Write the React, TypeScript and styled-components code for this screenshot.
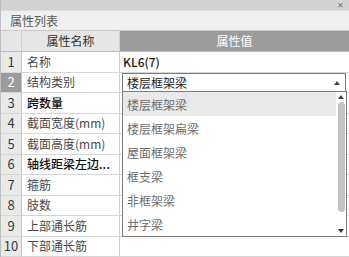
import React from 'react';
import styled, { createGlobalStyle } from 'styled-components';

const GlobalStyle = createGlobalStyle`
  html, body {
    margin: 0;
    padding: 0;
    background: #ffffff;
  }
  body {
    font-family: "Noto Sans CJK SC", "Noto Sans", sans-serif;
    font-size: 12px;
    color: #333;
  }
`;

const Panel = styled.div`
  position: relative;
  width: 349px;
  height: 257px;
  overflow: hidden;
  background: #fff;
  border-left: 1px solid #bdbdbd;
  box-sizing: border-box;
`;

const TopBar = styled.div`
  height: 10px;
  background: #d3d3d3;
  display: flex;
  justify-content: flex-end;
  align-items: center;
  padding-right: 5px;
  font-size: 8px;
  line-height: 10px;
  color: #777;
`;

const TitleBar = styled.div`
  height: 21px;
  box-sizing: border-box;
  background: #efefef;
  border-top: 1px solid #dcdcdc;
  border-bottom: 1px solid #c9c9c9;
  display: flex;
  align-items: center;
  padding-left: 9px;
  color: #5a5a5a;
  font-size: 12px;
  line-height: 20px;
`;

const Grid = styled.div`
  display: grid;
  grid-template-columns: 21px 98px 1fr;
  grid-template-rows: 21px repeat(10, 20.5px);
`;

const Cell = styled.div<{ $bg?: string; $align?: string; $color?: string; $weight?: number }>`
  box-sizing: border-box;
  display: flex;
  align-items: center;
  justify-content: ${(p) => p.$align || 'flex-start'};
  background: ${(p) => p.$bg || '#fff'};
  color: ${(p) => p.$color || '#3a3a3a'};
  font-weight: ${(p) => p.$weight || 400};
  border-right: 1px solid #d2d2d2;
  border-bottom: 1px solid #d6d6d6;
  line-height: 16px;
  white-space: nowrap;
  overflow: hidden;
`;

const NumCell = styled(Cell)`
  font-size: 13px;
  border-right-color: #c4c4c4;
`;

const NameCell = styled(Cell)`
  padding-left: 5px;
`;

const ValueCell = styled(Cell)`
  padding-left: 3px;
  border-right: none;
`;

const HeadCell = styled(Cell)`
  justify-content: center;
  border-bottom-color: #bcbcbc;
`;

const Combo = styled.div`
  flex: 1;
  align-self: stretch;
  margin: 0 3px 0 -1px;
  border: 1px solid #7a7a7a;
  border-bottom: none;
  display: flex;
  align-items: center;
  justify-content: space-between;
  padding: 0 5px 0 4px;
  color: #222;
`;

const TinyArrow = styled.span<{ $down?: boolean }>`
  width: 0;
  height: 0;
  border-left: 3px solid transparent;
  border-right: 3px solid transparent;
  ${(p) => (p.$down ? 'border-top: 4px solid #333;' : 'border-bottom: 4px solid #444;')}
`;

const DropList = styled.div`
  position: absolute;
  left: 121px;
  top: 91px;
  width: 225px;
  height: 146px;
  box-sizing: border-box;
  border: 1px solid #7e7e7e;
  background: #fff;
  display: flex;
`;

const Items = styled.div`
  flex: 1;
  display: flex;
  flex-direction: column;
`;

const Item = styled.div<{ $active?: boolean }>`
  height: 24px;
  display: flex;
  align-items: center;
  padding-left: 4px;
  color: #6e6e6e;
  background: ${(p) => (p.$active ? '#e9e9e9' : '#fff')};
`;

const ScrollBar = styled.div`
  width: 10px;
  display: flex;
  flex-direction: column;
  align-items: center;
  padding: 3px 0 3px;
  box-sizing: border-box;
`;

const Thumb = styled.div`
  width: 7px;
  margin: 3px 0;
  height: 110px;
  border-radius: 4px;
  background: #c3c3c3;
`;

const Spacer = styled.div`
  flex: 1;
`;

const rows = [
  { name: '名称', value: 'KL6(7)', valueBold: true },
  { name: '结构类别', combo: true },
  { name: '跨数量', bold: true },
  { name: '截面宽度(mm)' },
  { name: '截面高度(mm)' },
  { name: '轴线距梁左边...', bold: true },
  { name: '箍筋' },
  { name: '肢数' },
  { name: '上部通长筋' },
  { name: '下部通长筋' },
];

const options = ['楼层框架梁', '楼层框架扁梁', '屋面框架梁', '框支梁', '非框架梁', '井字梁'];

const App: React.FC = () => {
  return (
    <>
      <GlobalStyle />
      <Panel>
        <TopBar>✕</TopBar>
        <TitleBar>属性列表</TitleBar>
        <Grid>
          <HeadCell $bg="#e6e6e6" />
          <HeadCell $bg="#e6e6e6" $color="#333">属性名称</HeadCell>
          <HeadCell $bg="#9c9c9c" $color="#fff" style={{ borderRight: 'none' }}>属性值</HeadCell>
          {rows.map((r, i) => (
            <React.Fragment key={r.name}>
              <NumCell
                $align="center"
                $bg={r.combo ? '#9c9c9c' : '#e9e9e9'}
                $color={r.combo ? '#fff' : '#3a3a3a'}
              >
                {i + 1}
              </NumCell>
              <NameCell $color={r.bold ? '#111' : '#4a4a4a'} $weight={r.bold ? 500 : 400}>
                {r.name}
              </NameCell>
              <ValueCell $color="#1a1a1a" $weight={r.valueBold ? 500 : 400}>
                {r.combo ? (
                  <Combo>
                    <span>楼层框架梁</span>
                    <TinyArrow />
                  </Combo>
                ) : (
                  r.value
                )}
              </ValueCell>
            </React.Fragment>
          ))}
        </Grid>
        <DropList>
          <Items>
            {options.map((o, i) => (
              <Item key={o} $active={i === 0}>
                {o}
              </Item>
            ))}
          </Items>
          <ScrollBar>
            <TinyArrow />
            <Thumb />
            <Spacer />
            <TinyArrow $down />
          </ScrollBar>
        </DropList>
      </Panel>
    </>
  );
};

export default App;
